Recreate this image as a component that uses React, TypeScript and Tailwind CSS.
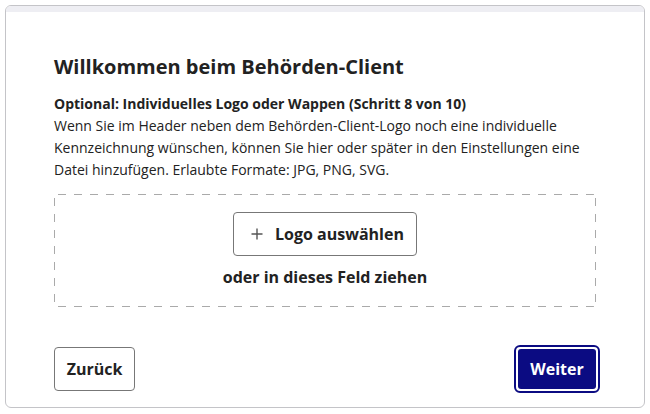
export default function App() {
  return (
    <div className="w-[650px] h-[414px] bg-white px-[5px] pt-[5px] pb-[6px] font-['Open_Sans',sans-serif] text-[#222]">
      <div className="h-full rounded-md border border-[#c4c4c8] overflow-hidden flex flex-col">
        {/* Obere Leiste */}
        <div className="h-[6px] bg-[#eeeef3]" />
        <div className="flex-1 flex flex-col px-[48px] pt-[41px] pb-[14px]">
          <h1 className="text-[20px] leading-[28px] font-bold mb-[12px]">
            Willkommen beim Behörden-Client
          </h1>
          <p className="text-[14px] leading-[22px] font-bold">
            Optional: Individuelles Logo oder Wappen (Schritt 8 von 10)
          </p>
          <p className="text-[14px] leading-[22px] w-[545px]">
            Wenn Sie im Header neben dem Behörden-Client-Logo noch eine individuelle
            Kennzeichnung wünschen, können Sie hier oder später in den Einstellungen eine
            Datei hinzufügen. Erlaubte Formate: JPG, PNG, SVG.
          </p>

          {/* Upload-Feld mit langen Strichen */}
          <div className="mt-[13px] h-[113px] w-[542px] rounded-[3px] flex flex-col items-center pt-[18px] [background-image:linear-gradient(to_right,#aaa_50%,transparent_50%),linear-gradient(to_right,#aaa_50%,transparent_50%),linear-gradient(to_bottom,#aaa_50%,transparent_50%),linear-gradient(to_bottom,#aaa_50%,transparent_50%)] [background-size:16px_1px,16px_1px,1px_16px,1px_16px] [background-position:4px_0,4px_100%,0_4px,100%_4px] [background-repeat:repeat-x,repeat-x,repeat-y,repeat-y]">
            <button className="h-[44px] pl-[17px] pr-[12px] border border-[#777] rounded-[4px] flex items-center gap-[12px] text-[16px] font-bold bg-white">
              <svg width="12" height="12" viewBox="0 0 12 12" className="text-[#555]">
                <path d="M6 0.5v11M0.5 6h11" stroke="currentColor" strokeWidth="1.4" />
              </svg>
              Logo auswählen
            </button>
            <p className="mt-[9px] text-[16px] font-bold">oder in dieses Feld ziehen</p>
          </div>

          <div className="mt-auto flex items-end justify-between">
            <button className="h-[44px] w-[81px] border border-[#777] rounded-[4px] text-[16px] font-bold mb-[2px]">
              Zurück
            </button>
            <button className="h-[48px] w-[86px] mr-[-4px] rounded-[6px] border-2 border-[#0b0b82] p-[2px]">
              <span className="h-full w-full rounded-[3px] bg-[#0b0b82] text-white text-[16px] font-bold flex items-center justify-center">
                Weiter
              </span>
            </button>
          </div>
        </div>
      </div>
    </div>
  );
}
